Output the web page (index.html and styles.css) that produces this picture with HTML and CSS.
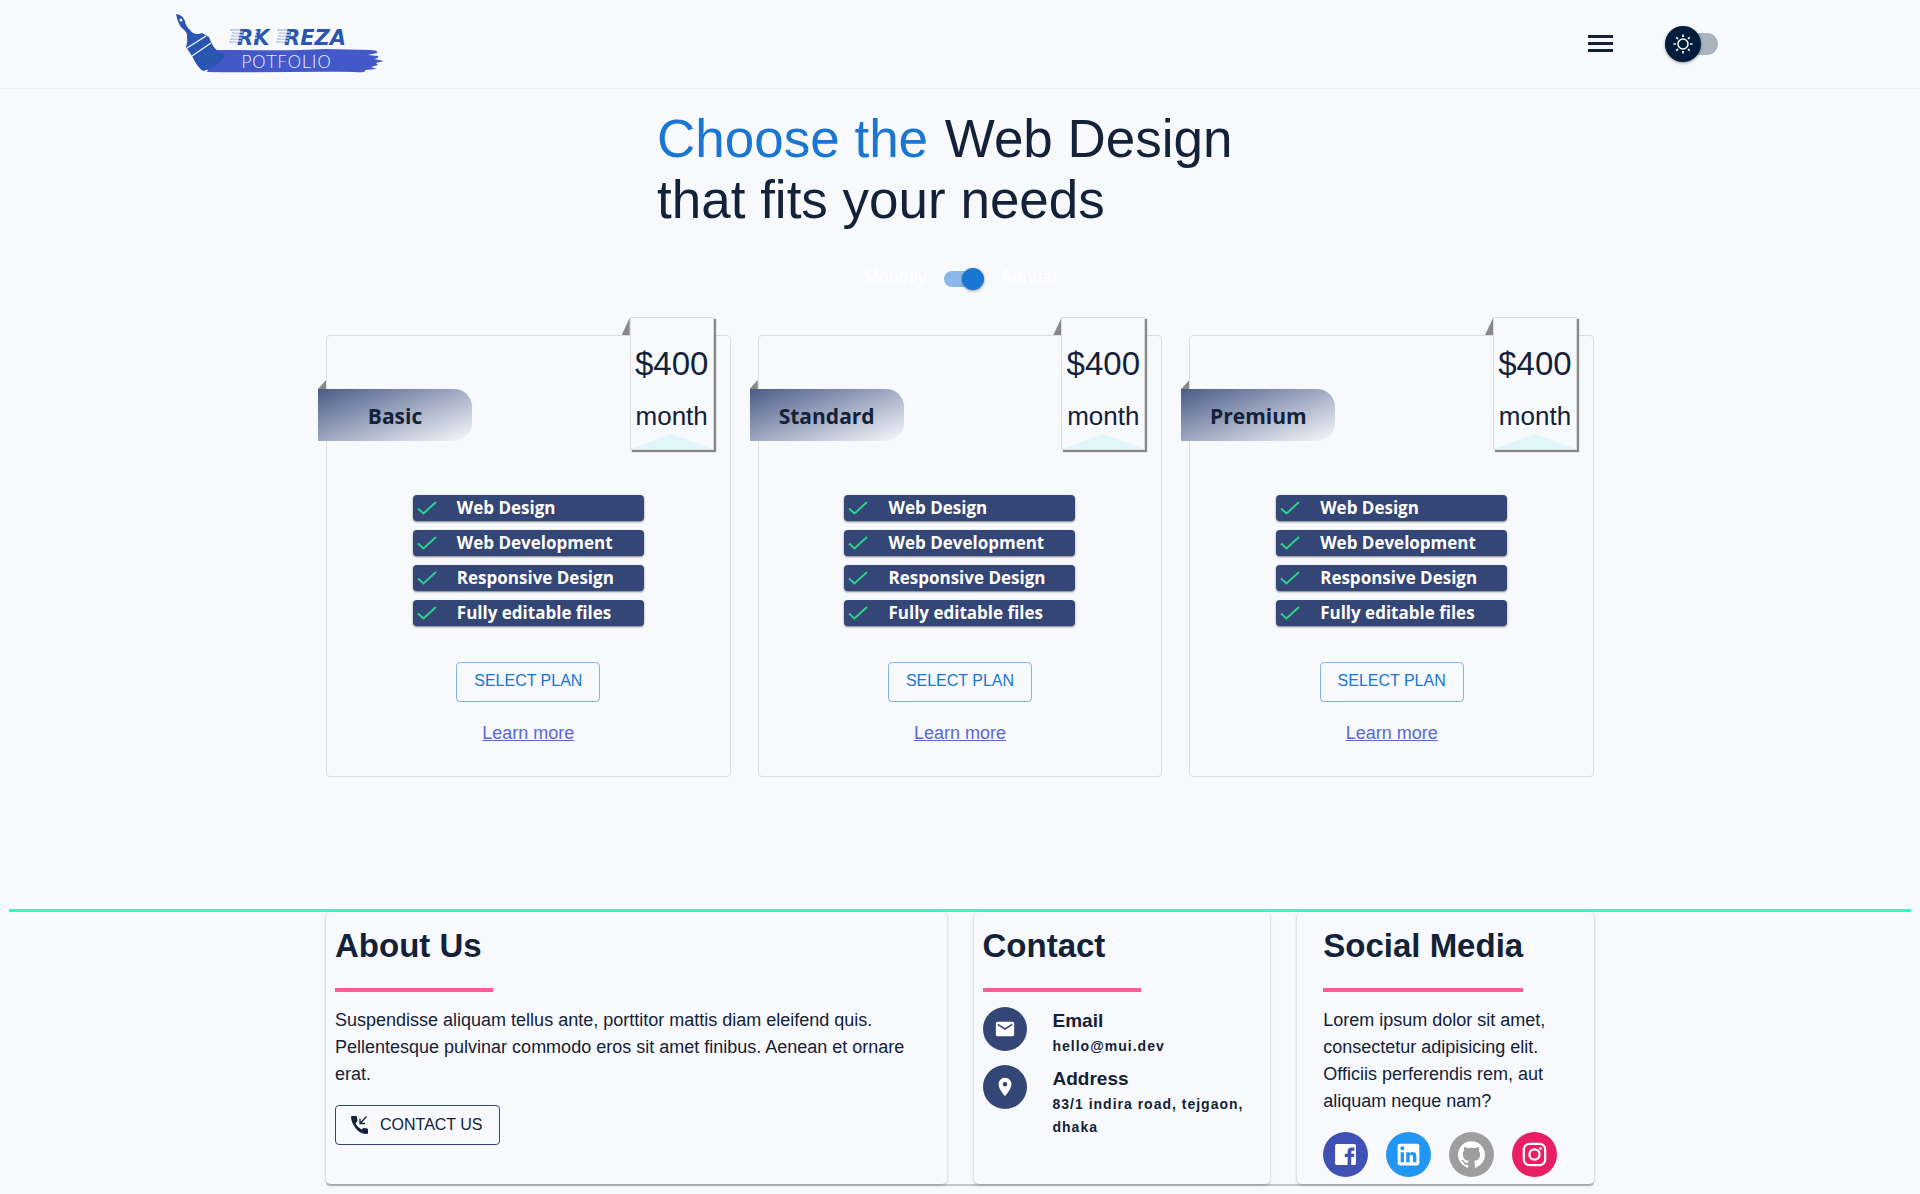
FILE: index.html
```html
<!DOCTYPE html>
<html lang="en">
<head>
<meta charset="utf-8">
<meta name="viewport" content="width=device-width, initial-scale=1">
<title>RK Reza Potfolio</title>
<link rel="stylesheet" href="styles.css">
</head>
<body>
<svg class="sprite" aria-hidden="true">
  <symbol id="tick" viewBox="0 0 20 14"><path d="M1 7.500 L6.500 12.500 L19 1" fill="none" stroke="currentColor" stroke-width="2"/></symbol>
</svg>

<header class="header">
  <div class="header-inner">
    <a class="logo" href="#" aria-label="RK Reza Potfolio">
      <svg viewBox="0 0 212 64" width="212" height="64">
        <path d="M40 38 C80 38 120 39 150 37 L195 38 Q203 38 202 41 L193 43 L203 44 Q204 46 199 47 L209 49 L201 51 L203 53 L196 55 L202 57 L190 58 Q192 61 180 60 C130 59 80 61 32 60 Z" fill="#4459c9"/>
        <path d="M1 2 Q8 3 10 9 Q10 13 15 18 Q19 24 27 21 L34 25 L36 30 Q41 41 50 42 Q46 54 28 59 Q22 55 17 44 L11 35 Q13 30 12 25 Q13 21 8 17 Q3 13 1 2 Z" fill="#2a55b0"/>
        <circle cx="6" cy="8" r="1.500" fill="#f7f9fc"/>
        <path d="M12 36 L31 24 M17 44 L36 31" stroke="#f7f9fc" stroke-width="1.200"/>
        <path d="M55 18H67 M57 21H67 M56 24H66 M55 27H65 M54 30H64 M80 18H84 M79 24H83 M102 18H114 M104 21H113 M103 24H113 M102 27H112 M101 30H111" stroke="#8fa8d8" stroke-width="1"/>
        <text class="logo-name" x="62" y="33">RK</text>
        <text class="logo-name" x="109" y="33">REZA</text>
        <path d="M60 20H68 M59 23H68 M58 26H67 M58 29H66 M78 20H83 M78 23H82 M78 26H82 M106 20H115 M106 23H115 M105 26H114 M105 29H113 M124 20H128 M124 23H128 M124 26H127 M140 21H144 M140 27H143" stroke="#f7f9fc" stroke-width="1"/>
        <text class="logo-sub" x="66" y="56">POTFOLIO</text>
      </svg>
    </a>
    <div class="header-tools">
      <button class="menu-button" type="button" aria-label="Menu">
        <svg viewBox="0 0 25 18" width="25" height="18"><path d="M0 0H25V3H0Z M0 7H25V10H0Z M0 14H25V17H0Z" fill="#132238"/></svg>
      </button>
      <label class="theme">
        <input class="theme-input" type="checkbox" aria-label="Dark theme">
        <svg class="theme-sun" viewBox="0 0 20 20" width="20" height="20" fill="none" stroke="#fff"><circle cx="10" cy="10" r="5" stroke-width="1.500"/><path d="M10 .5V3 M10 17V19.500 M.5 10H3 M17 10H19.500 M3.300 3.300L5 5 M15 15L16.700 16.700 M3.300 16.700L5 15 M15 5L16.700 3.300" stroke-width="1.700"/></svg>
      </label>
    </div>
  </div>
</header>

<main>
  <div class="intro">
    <h1 class="title"><span class="title-accent">Choose the</span> Web Design<br>that fits your needs</h1>
  </div>
  <div class="billing">
    <label for="billing">Monthly</label>
    <input class="switch" type="checkbox" id="billing" checked>
    <label for="billing">Annual</label>
  </div>

  <section class="wrap grid">
    <article class="plan">
      <div class="ribbon"><span class="price">$400</span><span class="period">month</span></div>
      <h2 class="plan-name">Basic</h2>
      <ul class="features">
        <li><svg class="tick"><use href="#tick"/></svg>Web Design</li>
        <li><svg class="tick"><use href="#tick"/></svg>Web Development</li>
        <li><svg class="tick"><use href="#tick"/></svg>Responsive Design</li>
        <li><svg class="tick"><use href="#tick"/></svg>Fully editable files</li>
      </ul>
      <button class="select" type="button">SELECT PLAN</button>
      <a class="more" href="#">Learn more</a>
    </article>
    <article class="plan">
      <div class="ribbon"><span class="price">$400</span><span class="period">month</span></div>
      <h2 class="plan-name">Standard</h2>
      <ul class="features">
        <li><svg class="tick"><use href="#tick"/></svg>Web Design</li>
        <li><svg class="tick"><use href="#tick"/></svg>Web Development</li>
        <li><svg class="tick"><use href="#tick"/></svg>Responsive Design</li>
        <li><svg class="tick"><use href="#tick"/></svg>Fully editable files</li>
      </ul>
      <button class="select" type="button">SELECT PLAN</button>
      <a class="more" href="#">Learn more</a>
    </article>
    <article class="plan">
      <div class="ribbon"><span class="price">$400</span><span class="period">month</span></div>
      <h2 class="plan-name">Premium</h2>
      <ul class="features">
        <li><svg class="tick"><use href="#tick"/></svg>Web Design</li>
        <li><svg class="tick"><use href="#tick"/></svg>Web Development</li>
        <li><svg class="tick"><use href="#tick"/></svg>Responsive Design</li>
        <li><svg class="tick"><use href="#tick"/></svg>Fully editable files</li>
      </ul>
      <button class="select" type="button">SELECT PLAN</button>
      <a class="more" href="#">Learn more</a>
    </article>
  </section>
</main>

<footer class="footer">
  <div class="wrap grid footer-grid">
    <section class="panel about">
      <h2 class="panel-title">About Us</h2>
      <p class="text">Suspendisse aliquam tellus ante, porttitor mattis diam eleifend quis. Pellentesque pulvinar commodo eros sit amet finibus. Aenean et ornare erat.</p>
      <button class="contact-button" type="button">
        <svg viewBox="0 0 18 20" width="18" height="20" fill="#132238"><path d="M1 1H5Q6 1 6 2L6.500 6L4.500 8.500Q7 13 10.500 14.500L12.500 13L16.500 13.500Q17 14 17 15V18Q17 19 16 19Q9 19 4.500 13Q.5 8 0 2Q0 1 1 1Z"/><path d="M15.500 1.500L9.500 8M9 3.500V8.500H14" fill="none" stroke="#132238" stroke-width="1.300"/></svg>
        CONTACT US
      </button>
    </section>
    <section class="panel contact">
      <h2 class="panel-title">Contact</h2>
      <div class="contact-row">
        <span class="disc"><svg viewBox="0 0 24 24" width="22" height="22" fill="#fff"><path d="M20 4H4c-1.100 0-2 .9-2 2v12c0 1.100.9 2 2 2h16c1.100 0 2-.9 2-2V6c0-1.100-.9-2-2-2zm0 4-8 5-8-5V6l8 5 8-5z"/></svg></span>
        <div><h3 class="contact-label">Email</h3><p class="contact-value">hello@mui.dev</p></div>
      </div>
      <div class="contact-row">
        <span class="disc"><svg viewBox="0 0 24 24" width="22" height="22" fill="#fff"><path d="M12 2C8.130 2 5 5.130 5 9c0 5.250 7 13 7 13s7-7.750 7-13c0-3.870-3.130-7-7-7zm0 9.500a2.500 2.500 0 0 1 0-5 2.500 2.500 0 0 1 0 5z"/></svg></span>
        <div><h3 class="contact-label">Address</h3><p class="contact-value">83/1 indira road, tejgaon, dhaka</p></div>
      </div>
    </section>
    <section class="panel social">
      <h2 class="panel-title">Social Media</h2>
      <p class="text">Lorem ipsum dolor sit amet, consectetur adipisicing elit. Officiis perferendis rem, aut aliquam neque nam?</p>
      <div class="social-links">
        <a class="social-link facebook" href="#" aria-label="Facebook"><svg viewBox="0 0 24 24" width="25" height="25" fill="#fff"><path d="M22 3.500v17a1.500 1.500 0 0 1-1.500 1.500H17.500v-7.500h2.700l.3-3.200h-3V9.500q0-1.200 1.300-1.200H20.500V5.200h-2.700Q14 5.200 14 9v2.300H11.300v3.200H14V22H3.500A1.500 1.500 0 0 1 2 20.500v-17A1.500 1.500 0 0 1 3.500 2h17A1.500 1.500 0 0 1 22 3.500z"/></svg></a>
        <a class="social-link linkedin" href="#" aria-label="LinkedIn"><svg viewBox="0 0 24 24" width="29" height="29" fill="#fff"><path d="M19 3a2 2 0 0 1 2 2v14a2 2 0 0 1-2 2H5a2 2 0 0 1-2-2V5a2 2 0 0 1 2-2h14m-.5 15.500v-5.300a3.260 3.260 0 0 0-3.260-3.260c-.85 0-1.840.52-2.320 1.300v-1.110h-2.790v8.370h2.790v-4.930c0-.77.62-1.400 1.390-1.400a1.400 1.400 0 0 1 1.400 1.400v4.930h2.790M6.880 8.560a1.680 1.680 0 0 0 1.680-1.680c0-.93-.75-1.690-1.680-1.690a1.690 1.690 0 0 0-1.690 1.690c0 .93.76 1.680 1.690 1.680m1.390 9.940v-8.370H5.500v8.370h2.770z"/></svg></a>
        <a class="social-link github" href="#" aria-label="GitHub"><svg viewBox="0 0 24 24" width="27" height="27" fill="#fff"><path d="M12 .3a12 12 0 0 0-3.800 23.380c.6.120.83-.26.83-.57L9 21.070c-3.340.72-4.040-1.610-4.040-1.610-.55-1.390-1.340-1.760-1.340-1.760-1.080-.74.090-.73.090-.73 1.200.09 1.830 1.240 1.830 1.240 1.080 1.830 2.810 1.300 3.500 1 .1-.78.420-1.310.76-1.610-2.670-.3-5.470-1.330-5.470-5.930 0-1.310.47-2.380 1.240-3.220-.14-.3-.54-1.520.1-3.180 0 0 1-.32 3.300 1.230a11.500 11.500 0 0 1 6 0c2.280-1.550 3.290-1.230 3.290-1.230.64 1.660.24 2.880.12 3.180a4.650 4.650 0 0 1 1.230 3.220c0 4.610-2.800 5.630-5.480 5.920.42.360.81 1.100.81 2.220l-.01 3.290c0 .31.2.690.82.570A12 12 0 0 0 12 .3"/></svg></a>
        <a class="social-link instagram" href="#" aria-label="Instagram"><svg viewBox="0 0 24 24" width="27" height="27" fill="none" stroke="#fff" stroke-width="2"><rect x="2.500" y="2.500" width="19" height="19" rx="5"/><circle cx="12" cy="12" r="4.500"/><circle cx="17.300" cy="6.700" r="1.200" fill="#fff" stroke="none"/></svg></a>
      </div>
    </section>
  </div>
</footer>
</body>
</html>
```
FILE: styles.css
```css
* { box-sizing: border-box; }

body {
  margin: 0;
  background: #f7f9fc;
  color: #132238;
  font-family: "Liberation Sans", Arial, sans-serif;
  font-size: 18px;
}

h1, h2, h3, p, ul { margin: 0; padding: 0; }
button { font-family: inherit; cursor: pointer; }
.sprite { display: none; }

/* Header */
.header { border-bottom: 1px solid #eff1f5; }
.header-inner {
  display: flex;
  align-items: center;
  justify-content: space-between;
  max-width: 1600px;
  height: 88px;
  margin: 0 auto;
  padding: 0 40px 0 15px;
}
.logo svg { display: block; }
.logo-name { font: italic bold 21px "DejaVu Sans", sans-serif; fill: #2a55b0; }
.logo-sub { font: 200 18px "DejaVu Sans", sans-serif; fill: #eef1ff; }
.header-tools { display: flex; align-items: center; gap: 52px; }
.menu-button { display: flex; padding: 0; border: 0; background: none; }
.theme { position: relative; display: block; width: 55px; height: 36px; }
.theme-input {
  appearance: none;
  display: flex;
  align-items: center;
  width: 53px;
  height: 22px;
  margin: 7px 0;
  border-radius: 11px;
  background: #aab4be;
}
.theme-input::before {
  content: "";
  flex: none;
  width: 36px;
  height: 36px;
  border-radius: 50%;
  background: #001e3c;
  box-shadow: 0 1px 3px rgba(0, 0, 0, .4);
}
.theme-sun { position: absolute; left: 8px; top: 8px; }

/* Intro */
.intro { max-width: 606px; margin: 0 auto; padding-top: 19px; }
.title { font-size: 53px; line-height: 61px; font-weight: 400; }
.title-accent { margin-right: 2px; color: #1976d2; }
.billing {
  display: flex;
  align-items: center;
  justify-content: center;
  gap: 16px;
  margin-top: 36px;
  color: #fff;
  line-height: 22px;
}
.switch {
  appearance: none;
  display: flex;
  align-items: center;
  justify-content: flex-end;
  width: 40px;
  height: 16px;
  margin: 3px 0 0 2px;
  border-radius: 8px;
  background: #8bb8e8;
}
.switch::before {
  content: "";
  width: 22px;
  height: 22px;
  border-radius: 50%;
  background: #1976d2;
  box-shadow: 0 1px 3px rgba(0, 0, 0, .4);
}

/* Plans */
.wrap { max-width: 1268px; margin: 0 auto; }
.grid { display: grid; grid-template-columns: repeat(12, 1fr); column-gap: 27px; }
main .grid { margin-top: 47px; }
.plan {
  position: relative;
  grid-column: span 4;
  display: flex;
  flex-direction: column;
  align-items: center;
  padding: 53px 0 29px;
  border: 1px solid #dadce0;
  border-radius: 4px;
}
.plan-name {
  position: relative;
  align-self: flex-start;
  width: 154px;
  margin-left: -9px;
  padding-top: 2px;
  border-radius: 0 18px 18px 0;
  background: linear-gradient(160deg, #4a5b88, #f7f9fc);
  font: bold 21px/50px "Open Sans", "Noto Sans", sans-serif;
  text-align: center;
}
.plan-name::before {
  content: "";
  position: absolute;
  left: 0;
  top: -9px;
  width: 8px;
  height: 9px;
  background: #888;
  clip-path: polygon(100% 0, 100% 100%, 0 100%);
}
.ribbon {
  position: absolute;
  top: -19px;
  right: 16px;
  display: flex;
  flex-direction: column;
  align-items: center;
  width: 84px;
  height: 133px;
  padding-top: 25px;
  border: 1px solid #dadce0;
  background: #f7f9fc;
  box-shadow: 2px 2px 1px #888;
}
.ribbon::before {
  content: "";
  position: absolute;
  left: -9px;
  top: 0;
  width: 8px;
  height: 17px;
  background: #888;
  clip-path: polygon(100% 0, 100% 100%, 0 100%);
}
.ribbon::after {
  content: "";
  position: absolute;
  left: 0;
  right: 0;
  bottom: 0;
  height: 15px;
  background: #dff7f8;
  clip-path: polygon(50% 0, 100% 100%, 0 100%);
}
.price { font-size: 33px; line-height: 42px; }
.period { font-size: 26px; line-height: 62px; }
.features { width: 231px; margin-top: 54px; list-style: none; display: grid; gap: 9px; }
.features li {
  display: flex;
  align-items: center;
  gap: 20px;
  height: 26px;
  padding-left: 4px;
  border-radius: 4px;
  background: #344675;
  box-shadow: 0 1px 2px rgba(0, 0, 0, .5);
  color: #fff;
  font: bold 17px/24px "Open Sans", "Noto Sans", sans-serif;
  white-space: nowrap;
}
.tick { flex: none; width: 20px; height: 14px; color: #2ed18a; }
.select {
  width: 144px;
  height: 40px;
  margin-top: 36px;
  padding: 0 0 3px;
  border: 1px solid #81b3e5;
  border-radius: 4px;
  background: none;
  color: #1976d2;
  font-size: 16px;
}
.more { margin-top: 18px; color: #5a67d8; line-height: 27px; }

/* Footer */
.footer { margin: 132px 9px 0; padding-bottom: 8px; border-top: 3px solid #2affc6; }
.footer-grid {
  border-radius: 4px;
  box-shadow: 0 2px 1px #c2c3c7;
}
.panel {
  grid-column: span 3;
  padding: 13px 9px 7px;
  border-radius: 5px;
  box-shadow: 0 1px 3px rgba(0, 0, 0, .25);
}
.about { grid-column: span 6; }
.social { padding-left: 26px; }
.panel-title {
  display: table;
  min-width: 158px;
  padding-bottom: 21px;
  border-bottom: 4px solid #ff5c93;
  font-size: 33px;
  line-height: 42px;
}
.text { margin-top: 15px; line-height: 27px; }
.contact-button {
  display: flex;
  align-items: center;
  gap: 11px;
  height: 40px;
  margin-top: 17px;
  padding: 0 16px 0 15px;
  border: 1px solid #344675;
  border-radius: 4px;
  background: none;
  color: #132238;
  font-size: 16px;
}
.contact-row { display: flex; gap: 26px; margin-top: 7px; }
.panel-title + .contact-row { margin-top: 15px; }
.disc {
  flex: none;
  display: grid;
  place-items: center;
  width: 44px;
  height: 44px;
  border-radius: 50%;
  background: #344675;
}
.contact-label { font-size: 19px; line-height: 28px; }
.contact-value { font-size: 14px; line-height: 23px; font-weight: 700; letter-spacing: 1px; }
.social-links { display: flex; gap: 18px; margin-top: 17px; }
.social-link { display: grid; place-items: center; width: 45px; height: 45px; border-radius: 50%; }
.facebook { background: #3f51b5; }
.linkedin { background: #2196f3; }
.github { background: #9e9e9e; }
.instagram { background: #e91e63; }
```
